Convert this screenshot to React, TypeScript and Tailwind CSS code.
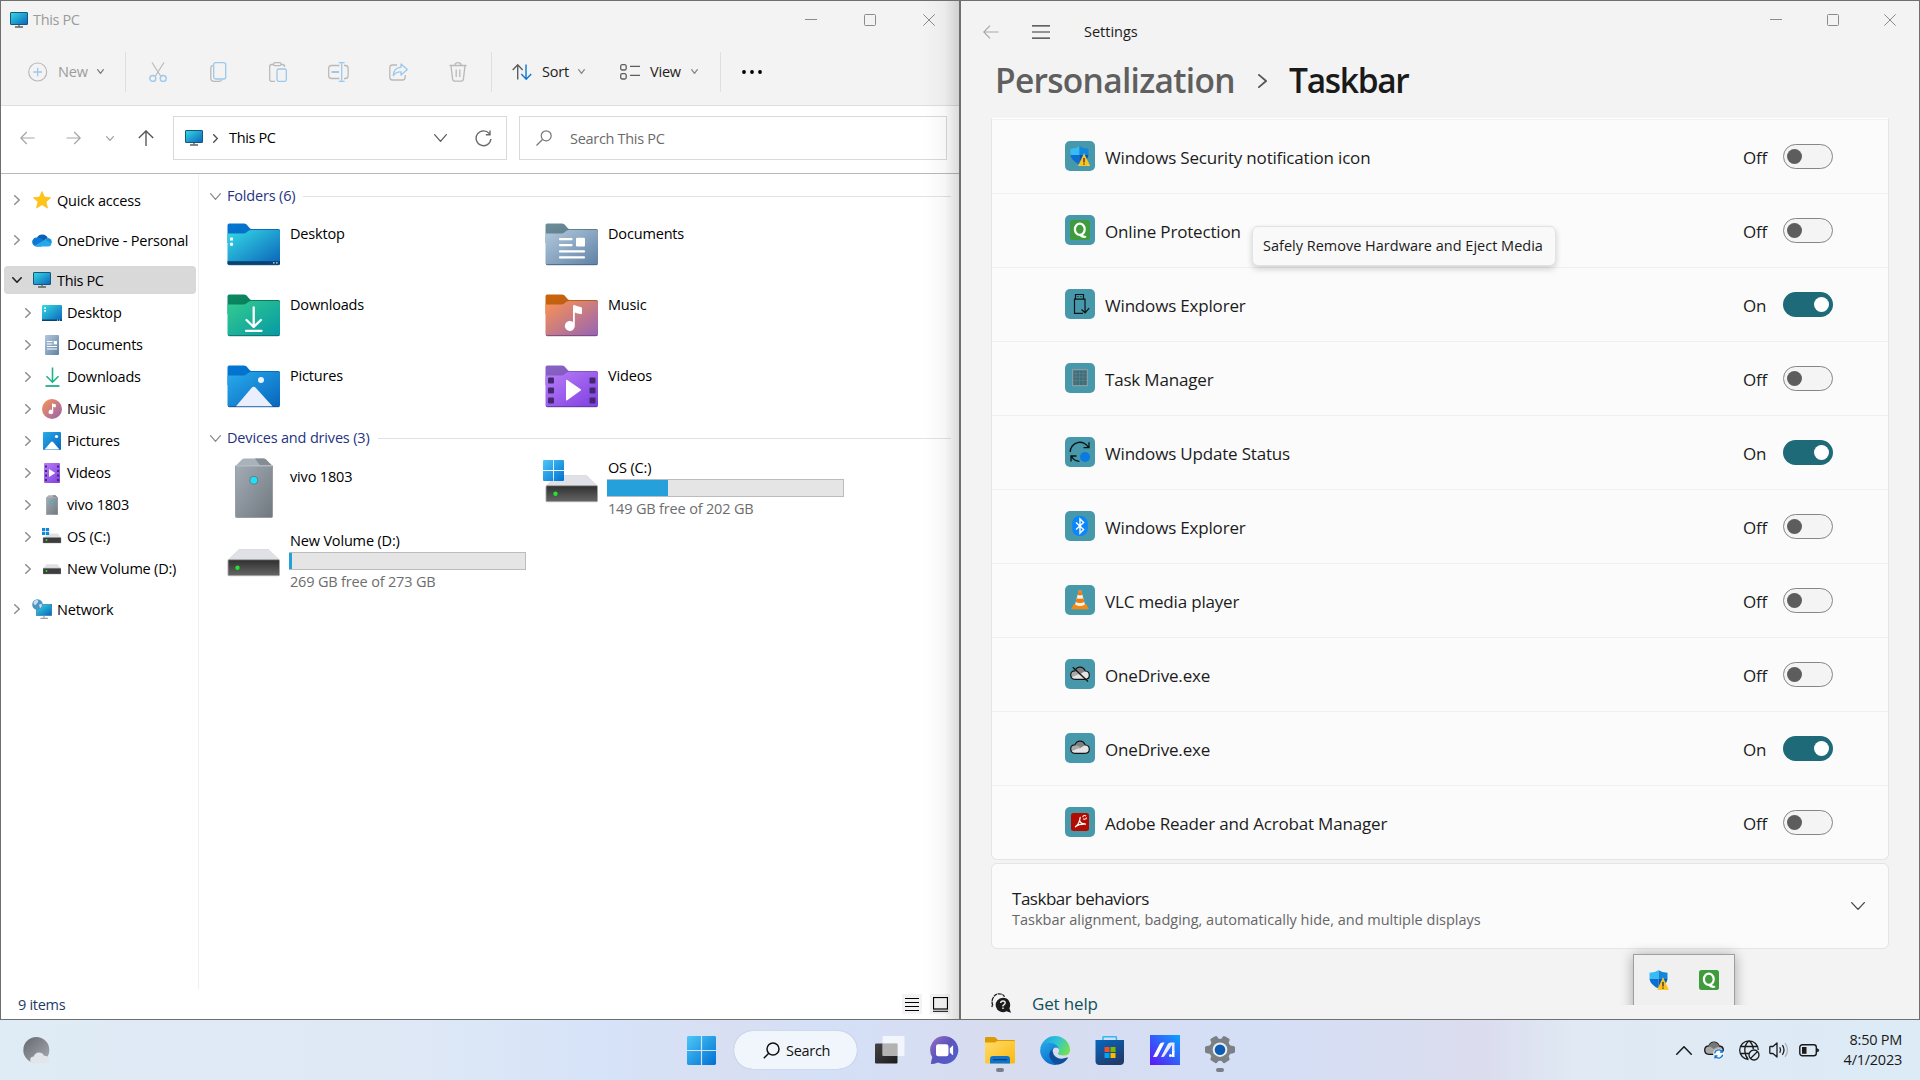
import type { ReactNode } from "react";

/* ---------- small line glyphs ---------- */

type Dir = "right" | "down" | "up";
function Chevron({ dir, w, h, color, sw = 1.3 }: { dir: Dir; w: number; h: number; color: string; sw?: number }) {
  const p = sw / 2;
  const d =
    dir === "right"
      ? `M${p} ${p}L${w - p} ${h / 2}L${p} ${h - p}`
      : dir === "down"
        ? `M${p} ${p}L${w / 2} ${h - p}L${w - p} ${p}`
        : `M${p} ${h - p}L${w / 2} ${p}L${w - p} ${h - p}`;
  return (
    <svg className="shrink-0" width={w} height={h} fill="none" stroke={color} strokeWidth={sw} strokeLinecap="round" strokeLinejoin="round">
      <path d={d} />
    </svg>
  );
}

function WindowControls({ className, gap }: { className: string; gap: string }) {
  return (
    <div className={`flex items-center text-[#8b8b8b] ${className} ${gap}`}>
      <svg width="12" height="12" stroke="currentColor" fill="none"><path d="M0 5.5h12" /></svg>
      <svg width="12" height="12" stroke="currentColor" fill="none"><rect x=".5" y=".5" width="11" height="11" rx="1" /></svg>
      <svg width="12" height="12" stroke="currentColor" fill="none"><path d="M.3.3l11.4 11.4M11.7.3L.3 11.7" /></svg>
    </div>
  );
}

/* ---------- explorer icons ---------- */

function Monitor() {
  return (
    <svg className="shrink-0" width="18" height="16" viewBox="0 0 18 16">
      <defs>
        <linearGradient id="mon" x1="0" y1="0" x2="1" y2="1">
          <stop offset="0" stopColor="#35dbe2" />
          <stop offset="1" stopColor="#0a64bd" />
        </linearGradient>
      </defs>
      <rect x="8" y="12.5" width="2" height="2" fill="#8a8f93" />
      <rect x="5" y="14.3" width="8" height="1.4" fill="#50565b" />
      <rect x=".5" y=".5" width="17" height="12" rx=".5" fill="url(#mon)" stroke="#17557f" />
    </svg>
  );
}

function Folder({ id, tab, tab2, a, b, edge, children }: { id: string; tab: string; tab2: string; a: string; b: string; edge: string; children: ReactNode }) {
  return (
    <svg className="shrink-0" width="54" height="43" viewBox="0 0 54 43">
      <defs>
        <linearGradient id={`${id}f`} x1="0" y1="0" x2="1" y2="1">
          <stop offset="0" stopColor={a} />
          <stop offset="1" stopColor={b} />
        </linearGradient>
        <linearGradient id={`${id}t`} x1="0" y1="0" x2="1" y2="1">
          <stop offset="0" stopColor={tab} />
          <stop offset="1" stopColor={tab2} />
        </linearGradient>
      </defs>
      <path d="M.5 2.2Q.5.5 2.2.5H16.800q1.500 0 2.800 1.100l3 3.400q.8.900 2 .9H51.500q1.500 0 1.500 1.500V20H.5Z" fill={`url(#${id}t)`} />
      <path d="M.5 10.500H16.500q1.600 0 2.800-1l2.200-1.700q1.200-.9 2.800-.9H51.500q1.500 0 1.500 1.500V40q0 1.700-1.700 1.700H2.200Q.5 41.700.5 40Z" fill={`url(#${id}f)`} />
      <path d="M1 40.900q.4.800 1.400.800H51q1.200 0 1.700-.8" fill="none" stroke={edge} strokeWidth="1" />
      {children}
    </svg>
  );
}

const folderDesktop = (
  <Folder id="fd" tab="#0078d4" tab2="#0a62b5" a="#35dbe6" b="#0a62b9" edge="#0b3f74">
    <rect x=".5" y="38.200" width="52.500" height="3.200" fill="#0c4270" />
    <rect x="3" y="14.500" width="3" height="3" rx=".6" fill="#fff" />
    <rect x="3" y="19.700" width="3" height="3" rx=".6" fill="#fff" />
    <path d="M46 39.800h1.600M49 39.800h1.600" stroke="#cde" strokeWidth="1.200" />
  </Folder>
);
const folderDocuments = (
  <Folder id="fo" tab="#6e8e9b" tab2="#52707e" a="#b3c9dd" b="#6082a5" edge="#40607e">
    <g fill="#fff">
      <rect x="14" y="15" width="13.500" height="2.300" rx=".8" />
      <rect x="14" y="21" width="13.500" height="2.300" rx=".8" />
      <rect x="14" y="27.200" width="26" height="2.300" rx=".8" />
      <rect x="14" y="33.200" width="26" height="2.300" rx=".8" />
      <rect x="31" y="14.800" width="9" height="8.600" rx="1.200" />
    </g>
  </Folder>
);
const folderDownloads = (
  <Folder id="fw" tab="#0c8a63" tab2="#067052" a="#33cc8e" b="#0699a5" edge="#06695f">
    <path d="M26.700 13.500V32M19.500 26l7.200 7 7.200-7M19 36.800h15.500" fill="none" stroke="#fff" strokeWidth="2.300" strokeLinecap="round" strokeLinejoin="round" />
  </Folder>
);
const folderMusic = (
  <Folder id="fm" tab="#cf6407" tab2="#a45a2c" a="#fd9350" b="#9464b4" edge="#6d3f7c">
    <path d="M28 11.800q.2-1 1.200-.9 3.300 1.500 6.600 2 1.200.2 1.200 1.200v5.200q0 1-1.200.8-3.500-.4-6-1.700V32a5 5 0 1 1-1.800-3.900Z" fill="#fff" />
  </Folder>
);
const folderPictures = (
  <Folder id="fp" tab="#0078d4" tab2="#0867bd" a="#29abec" b="#0765bd" edge="#0b4a8f">
    <path d="M9 41.200L24.500 23q2.200-2.400 4.400 0L45.500 41.200Z" fill="#e9effd" />
    <circle cx="34" cy="15" r="3" fill="#e9f2fd" />
  </Folder>
);
const folderVideos = (
  <Folder id="fv" tab="#8a63c8" tab2="#7652b4" a="#b97ef8" b="#7f3fe0" edge="#56309c">
    <path d="M21 15.500q0-1.200 1.200-.6l13.500 9.300q.9.700 0 1.400L22.200 35.300q-1.200.6-1.200-.6Z" fill="#fff" />
    <g fill="#43286f">
      <rect x="3" y="12.500" width="6" height="6" rx="1" /><rect x="3" y="22.500" width="6" height="6" rx="1" /><rect x="3" y="32.500" width="6" height="6" rx="1" />
      <rect x="44.500" y="12.500" width="6" height="6" rx="1" /><rect x="44.500" y="22.500" width="6" height="6" rx="1" /><rect x="44.500" y="32.500" width="6" height="6" rx="1" />
    </g>
  </Folder>
);

function Tower({ w, h, id }: { w: number; h: number; id: string }) {
  return (
    <svg width={w} height={h} viewBox="0 0 38 60" preserveAspectRatio="none">
      <defs>
        <linearGradient id={id} x1="0" y1="0" x2="1" y2="1">
          <stop offset="0" stopColor="#a3adb5" />
          <stop offset="1" stopColor="#70777f" />
        </linearGradient>
      </defs>
      <path d="M9.500.5H28.500Q30 .5 31 1.500L37.500 8V10H.5V8L7 1.500Q8 .5 9.500.5Z" fill="#a9b2ba" />
      <path d="M20 .5h8.500Q30 .5 31 1.500L37.500 8h-12Z" fill="#848c94" />
      <rect x=".5" y="7.500" width="37" height="52" rx="1" fill={`url(#${id})`} stroke="#8b939b" strokeWidth=".8" />
      <path d="M1 7.800h36" stroke="#c3cbd2" strokeWidth="1" />
      <circle cx="18.800" cy="22.300" r="4.300" fill="#5b7280" />
      <circle cx="18.800" cy="22.300" r="3.500" fill="#22e0f2" />
    </svg>
  );
}

function Drive({ id }: { id: string }) {
  return (
    <svg width="54" height="28" viewBox="0 0 54 28">
      <defs>
        <linearGradient id={id} x1="0" y1="0" x2="0" y2="1">
          <stop offset="0" stopColor="#2f2f2f" />
          <stop offset="1" stopColor="#666" />
        </linearGradient>
      </defs>
      <path d="M12 .5H41.500L52.500 11H1Z" fill="#dfe1e6" stroke="#cfd1d4" strokeWidth=".6" />
      <rect x="1" y="10.700" width="51.500" height="16" rx="1" fill={`url(#${id})`} stroke="#a6a6a6" strokeWidth=".9" />
      <circle cx="10.500" cy="18.700" r="2.200" fill="#1fe52b" />
    </svg>
  );
}

function WinLogo({ size, id }: { size: number; id: string }) {
  return (
    <svg width={size} height={size} viewBox="0 0 30 30">
      <defs>
        <linearGradient id={id} gradientUnits="userSpaceOnUse" x1="0" y1="0" x2="30" y2="30">
          <stop offset="0" stopColor="#4cc8f8" />
          <stop offset="1" stopColor="#0070d2" />
        </linearGradient>
      </defs>
      <g fill={`url(#${id})`}>
        <path d="M1.500 0H14.400V14.400H0V1.500Q0 0 1.500 0ZM15.600 0H28.500Q30 0 30 1.500V14.400H15.600ZM0 15.600H14.400V30H1.500Q0 30 0 28.500ZM15.600 15.600H30V28.500Q30 30 28.500 30H15.600Z" />
      </g>
    </svg>
  );
}

const sIcon: Record<string, ReactNode> = {
  star: (
    <svg width="18" height="18" viewBox="0 0 18 18">
      <path d="M9 .4l2.500 5.700 6.200.6-4.700 4.100 1.500 6.300L9 13.800l-5.500 3.300L5 10.800.3 6.700l6.200-.6Z" fill="#ffc417" stroke="#fbb50a" strokeWidth=".6" strokeLinejoin="round" />
    </svg>
  ),
  cloud: (
    <svg width="20" height="14" viewBox="0 0 20 14">
      <path d="M5 4.600A6 6 0 0 1 15.800 5L10 9Z" fill="#0a5fb6" />
      <path d="M4.500 13.400A4.400 4.400 0 0 1 4.700 4.500q3-.3 5.800 2L16 9 9 13.400Z" fill="#0f78d4" />
      <path d="M12 8l3.600-3.100A4.300 4.300 0 0 1 19.800 9.500l-2 2.500Z" fill="#1490df" />
      <path d="M2.300 12.700L12.200 7.200q1-.4 2 .1l5.300 3.200Q19.300 13.400 16 13.400H4.500Q3.200 13.400 2.300 12.700Z" fill="#28a8ea" />
    </svg>
  ),
  monitor: <Monitor />,
  desktop: (
    <svg width="20" height="16" viewBox="0 0 20 16">
      <rect width="20" height="16" rx="1" fill="url(#mon)" /><rect y="14.500" width="20" height="1.500" fill="#0c4270" />
      <path d="M2.200 2.200h1.800v1.700H2.200zM2.200 5h1.800v1.700H2.200z" fill="#fff" />
      <path d="M15 15.200h1M17 15.200h1" stroke="#cde" />
    </svg>
  ),
  doc: (
    <svg width="14" height="20" viewBox="0 0 14 20">
      <rect width="14" height="20" rx="1" fill="url(#fof)" />
      <path d="M2 6.500h5.500M2 9h5.500M2 11.500h10M2 14h10" stroke="#fff" strokeWidth="1.200" />
      <rect x="8.800" y="6" width="3.200" height="3.400" fill="#fff" />
    </svg>
  ),
  down: (
    <svg width="15" height="20" viewBox="0 0 15 20" fill="none">
      <path d="M7.500.5V15M1.500 9.200l6 6 6-6" stroke="#1fb489" strokeWidth="1.600" />
      <path d="M.5 19h14" stroke="#16a88a" strokeWidth="1.700" />
    </svg>
  ),
  music: (
    <svg width="20" height="20" viewBox="0 0 20 20">
      <circle cx="10" cy="10" r="10" fill="url(#fmf)" />
      <path d="M10 4.200q1.700.8 3.800 1.100v3q-1.500-.1-2.600-.6v5.300a2.300 2.200 0 1 1-1.200-2Z" fill="#fff" />
    </svg>
  ),
  pic: (
    <svg width="18" height="18" viewBox="0 0 18 18">
      <rect width="18" height="18" rx="1" fill="url(#fpf)" />
      <path d="M1.500 17.500L8 10q1-1.100 2 0l6.500 7.500Z" fill="#fff" /><circle cx="13.500" cy="4.500" r="1.600" fill="#fff" />
    </svg>
  ),
  video: (
    <svg width="16" height="20" viewBox="0 0 16 20">
      <rect width="16" height="20" rx="1" fill="url(#fvf)" />
      <path d="M5 6l6.300 4L5 14Z" fill="#fff" />
      <path d="M2 2.500v16M14 2.500v16" stroke="#43286f" strokeWidth="2" strokeDasharray="2 2.500" />
    </svg>
  ),
  tower: <Tower w={12} h={20} id="tw1" />,
  os: (
    <svg width="20" height="18" viewBox="0 0 20 18">
      <path d="M5 5.500h11l2.500 4h-16Z" fill="#dfe1e6" />
      <rect x="1" y="9.500" width="18" height="5.500" rx=".5" fill="#3d3d3d" stroke="#888" strokeWidth=".4" />
      <circle cx="4.500" cy="12" r=".9" fill="#2bea35" />
      <path d="M0 0h3.200v3.200H0zM3.900 0h3.200v3.200H3.900zM0 3.900h3.200v3.200H0zM3.900 3.900h3.200v3.200H3.900z" fill="#0f88dc" />
    </svg>
  ),
  drive: (
    <svg width="18" height="11" viewBox="0 0 18 11">
      <path d="M3.500.3h11L17.700 4.500H.3Z" fill="#dfe1e6" />
      <rect x="0" y="4.300" width="18" height="5.700" rx=".5" fill="#3d3d3d" stroke="#888" strokeWidth=".4" />
      <circle cx="3.500" cy="7" r=".9" fill="#2bea35" />
    </svg>
  ),
  network: (
    <svg width="20" height="20" viewBox="0 0 20 20">
      <rect x="4.500" y="5.500" width="15.200" height="11" fill="url(#mon)" stroke="#1c6fa3" strokeWidth=".6" />
      <path d="M12 16.500v2.500M8.500 19.400h7.500" stroke="#9aa0a5" strokeWidth="1.200" />
      <circle cx="5.500" cy="5.500" r="5.300" fill="#4d94c2" /><path d="M2 2.500q2-2 4-1.200 1 2-1 3-1 2.500-3 1.200Q1 4 2 2.500ZM7 5.500l2.500-.8.500 2.200-2 2.500Z" fill="#c4e0ee" />
    </svg>
  ),
};

/* ---------- explorer ---------- */

function Divider() {
  return <div className="h-10 w-px shrink-0 bg-[#dfdfdf]" />;
}

function Toolbar() {
  const gray = "#b9b9b9";
  const blue = "#9cc8ec";
  return (
    <div className="flex h-[68px] shrink-0 items-center border-b border-[#dedede] text-[14.5px] tracking-[-0.2px] text-[#1b1b1b]">
      <svg className="ml-[27px] shrink-0" width="20" height="20" fill="none">
        <circle cx="9.700" cy="10" r="9" stroke={gray} strokeWidth="1.200" />
        <path d="M9.700 5.700v8.600M5.400 10h8.600" stroke={blue} strokeWidth="1.300" />
      </svg>
      <span className="mt-px ml-[10px] w-[39px] text-[#9b9b9b]">New</span>
      <Chevron dir="down" w={7} h={5} color="#7d7d7d" />
      <div className="ml-[21px]"><Divider /></div>
      <div className="ml-[23px] flex items-center">
        <svg width="18" height="20" fill="none" strokeWidth="1.200">
          <path d="M3 .5l8.600 13.500M15 .5L6.400 14" stroke={gray} /><circle cx="3.800" cy="16.500" r="3" stroke={blue} strokeWidth="1.400" /><circle cx="14.200" cy="16.500" r="3" stroke={blue} strokeWidth="1.400" />
        </svg>
        <svg className="ml-[43px]" width="17" height="20" fill="none" strokeWidth="1.300">
          <path d="M2.800 3.500Q.8 4 .8 6v10q0 3.300 3.300 3.300h5q1.700 0 2.600-1.300" stroke={gray} /><rect x="3.700" y=".7" width="12" height="16.300" rx="2" stroke={blue} />
        </svg>
        <svg className="ml-[42px]" width="18" height="20" fill="none" strokeWidth="1.300">
          <path d="M4.500 2.500H2.700q-2 0-2 2v12.800q0 2 2 2H6M12 2.500h1.500q2 0 2 2V5" stroke={gray} /><rect x="4.500" y=".7" width="7.500" height="3" rx="1.500" stroke={gray} /><rect x="8" y="7" width="9.300" height="12.300" rx="1.500" stroke={blue} />
        </svg>
        <svg className="ml-[41px]" width="21" height="20" fill="none" strokeWidth="1.300">
          <path d="M11.500 3.500H3.500q-2.800 0-2.800 2.700v7.600q0 2.700 2.800 2.700h8M16 3.500h1.300q2.800 0 2.800 2.700v7.600q0 2.700-2.800 2.700H16" stroke={gray} />
          <path d="M3.500 10H11" stroke={blue} strokeWidth="2" /><path d="M13.700.7v18.600M10.700.7h6M10.700 19.300h6" stroke={blue} />
        </svg>
        <svg className="ml-[40px]" width="19" height="20" fill="none" strokeWidth="1.300" strokeLinejoin="round">
          <path d="M8 3H3.500Q.8 3 .8 5.700v9.600q0 2.700 2.700 2.700h10q2.700 0 2.700-2.700V13" stroke={gray} />
          <path d="M12 2l6.300 5.500L12 13V9.900Q7.500 9.500 4.300 13.500 4.500 6 12 5.200Z" stroke={blue} />
        </svg>
        <svg className="ml-[41px]" width="18" height="20" fill="none" stroke={gray} strokeWidth="1.300">
          <path d="M.5 3.500h17M6 3.200Q6 .7 9 .7t3 2.500M2 3.700l1.600 13.500q.3 2 2 2h6.800q1.700 0 2-2L16 3.700M7.200 7.500v7.500M10.800 7.500v7.500" />
        </svg>
      </div>
      <div className="ml-6"><Divider /></div>
      <svg className="ml-5 shrink-0" width="20" height="16" fill="none" strokeWidth="1.400">
        <path d="M5.700 15.500V1M.7 6l5-5.200 5 5.200" stroke="#5d5d5d" /><path d="M14 .5V15M9.300 10l4.900 5.200 5-5.200" stroke="#0a78d4" />
      </svg>
      <span className="mt-px ml-[10px] w-9">Sort</span>
      <Chevron dir="down" w={7} h={5} color="#888" />
      <svg className="ml-[35px] shrink-0" width="20" height="16" fill="none" stroke="#5d5d5d" strokeWidth="1.300">
        <rect x=".7" y=".7" width="5.500" height="5.300" rx="1.500" /><rect x=".7" y="9.700" width="5.500" height="5.300" rx="1.500" /><path d="M10 2.300h10M10 11.300h10" />
      </svg>
      <span className="mt-px ml-[10px] w-[41px]">View</span>
      <Chevron dir="down" w={7} h={5} color="#888" />
      <div className="ml-[22px]"><Divider /></div>
      <svg className="ml-[21px]" width="20" height="4"><circle cx="2" cy="2" r="1.900" /><circle cx="10" cy="2" r="1.900" /><circle cx="18" cy="2" r="1.900" /></svg>
    </div>
  );
}

function AddressRow() {
  return (
    <div className="flex h-[68px] shrink-0 items-start border-b border-[#b9b9b9] bg-white pt-[10px] text-[14.5px]">
      <div className="flex h-11 w-[172px] items-center pl-[19px]">
        <svg width="15" height="14" fill="none" stroke="#a5a5a5" strokeWidth="1.200"><path d="M.8 7H14.500M6.800 1l-6 6 6 6" /></svg>
        <svg className="ml-[31px]" width="15" height="14" fill="none" stroke="#a5a5a5" strokeWidth="1.200"><path d="M.5 7H14.200M8.200 1l6 6-6 6" /></svg>
        <div className="ml-[25px]"><Chevron dir="down" w={8} h={5} color="#a0a0a0" sw={1.2} /></div>
        <svg className="ml-[24px]" width="16" height="16" fill="none" stroke="#5a5a5a" strokeWidth="1.400"><path d="M8 16V1M.8 8L8 .9 15.200 8" /></svg>
      </div>
      <div className="flex h-11 w-[334px] items-center border border-[#d9d9d9] pl-[11px]">
        <Monitor />
        <div className="ml-[10px]"><Chevron dir="right" w={5} h={9} color="#555" sw={1.4} /></div>
        <span className="ml-[11px] w-[205px] tracking-[-0.35px] text-black">This PC</span>
        <Chevron dir="down" w={13} h={8} color="#5e5e5e" />
        <svg className="ml-[28px]" width="17" height="17" fill="none" stroke="#6a6a6a" strokeWidth="1.400"><path d="M14.300 3.600A7.400 7.400 0 1 0 15.900 9M15 .5V4.700H10.800" /></svg>
      </div>
      <div className="ml-3 flex h-11 w-[428px] items-center border border-[#d9d9d9] pl-[16px]">
        <svg width="16" height="16" fill="none" stroke="#777" strokeWidth="1.200"><circle cx="10.200" cy="5.800" r="5" /><path d="M6.500 9.500L.5 15.500" /></svg>
        <span className="mt-[2px] ml-[18px] tracking-[-0.3px] text-[#6b6b6b]">Search This PC</span>
      </div>
    </div>
  );
}

function TreeItem({ icon, label, level }: { icon: string; label: string; level: 0 | 1 }) {
  return (
    <div className={`flex shrink-0 items-center ${level === 0 ? "h-10 pl-[13px]" : "h-8 pl-6"}`}>
      <Chevron dir="right" w={6} h={10} color="#8e8e8e" sw={1.5} />
      <div className={`flex w-5 justify-center ${level === 0 ? "ml-3" : "ml-[11px]"}`}>{sIcon[icon]}</div>
      <span className={`ml-[5px] whitespace-nowrap ${level === 0 ? "mt-px" : ""}`}>{label}</span>
    </div>
  );
}

function SideTree() {
  const kids = [["desktop", "Desktop"], ["doc", "Documents"], ["down", "Downloads"], ["music", "Music"], ["pic", "Pictures"], ["video", "Videos"], ["tower", "vivo 1803"], ["os", "OS (C:)"], ["drive", "New Volume (D:)"]];
  return (
    <div className="flex w-[198px] shrink-0 flex-col border-r border-[#f0f0f0] pt-[6px] text-[14.5px] tracking-[-0.2px] text-black">
      <TreeItem icon="star" label="Quick access" level={0} />
      <TreeItem icon="cloud" label="OneDrive - Personal" level={0} />
      <div className="mt-[6px] mb-[3px] ml-[3px] flex h-7 w-48 shrink-0 items-center rounded-sm bg-[#d9d9d9] pl-2">
        <Chevron dir="down" w={10} h={6} color="#222" sw={1.6} />
        <div className="ml-[11px]"><Monitor /></div>
        <span className="mt-px ml-[6px] tracking-[-0.35px]">This PC</span>
      </div>
      {kids.map(([icon, label]) => <TreeItem key={label} icon={icon} label={label} level={1} />)}
      <div className="h-1" />
      <TreeItem icon="network" label="Network" level={0} />
    </div>
  );
}

function GroupHeader({ label }: { label: string }) {
  return (
    <div className="flex h-5 items-center text-[#1f3383]">
      <Chevron dir="down" w={11} h={7} color="#8a8a8a" sw={1.2} />
      <span className="ml-[6px] mr-2">{label}</span>
      <div className="mt-px h-px grow bg-[#e2e2e2]" />
    </div>
  );
}

function FolderCell({ icon, label }: { icon: ReactNode; label: string }) {
  return (
    <div className="flex h-[71px] items-start">
      {icon}
      <span className="ml-[9px] leading-[22px]">{label}</span>
    </div>
  );
}

function VolumeInfo({ name, free, fill }: { name: string; free: string; fill: string }) {
  return (
    <div className="flex w-[237px] flex-col">
      <span className="pl-px leading-[22px]">{name}</span>
      <div className="h-[18px] border border-l-0 border-[#bcbcbc] bg-[#e5e5e5]"><div className={`h-full bg-[#26a0da] ${fill}`} /></div>
      <span className="mt-[2px] pl-px leading-[20px] text-[#6d6d6d]">{free}</span>
    </div>
  );
}

function Explorer() {
  return (
    <section className="relative flex h-[1020px] w-[960px] shrink-0 flex-col border border-[#6f6f6f] bg-white">
      <div className="flex h-[37px] shrink-0 items-center bg-[#f3f3f3] pl-[9px] text-[14.5px] tracking-[-0.35px] text-[#9b9b9b]">
        <Monitor />
        <span className="ml-[5px] grow">This PC</span>
        <WindowControls className="mr-[24px]" gap="gap-[47px]" />
      </div>
      <div className="bg-[#f3f3f3]"><Toolbar /></div>
      <AddressRow />
      <div className="flex grow">
        <SideTree />
        <div className="grow pt-[12px] pr-[8px] pl-[11px] text-[14.5px] tracking-[-0.17px] text-black">
          <GroupHeader label="Folders (6)" />
          <div className="mt-[17px] ml-[17px] grid grid-cols-[318px_1fr]">
            <FolderCell icon={folderDesktop} label="Desktop" />
            <FolderCell icon={folderDocuments} label="Documents" />
            <FolderCell icon={folderDownloads} label="Downloads" />
            <FolderCell icon={folderMusic} label="Music" />
            <FolderCell icon={folderPictures} label="Pictures" />
            <FolderCell icon={folderVideos} label="Videos" />
          </div>
          <div className="-mt-[8px]"><GroupHeader label="Devices and drives (3)" /></div>
          <div className="ml-[17px] grid grid-cols-[318px_1fr]">
            <div className="flex h-[73px] items-start pt-[10px]">
              <div className="flex w-[54px] justify-center"><Tower w={38} h={60} id="tw2" /></div>
              <span className="mt-[9px] ml-[9px] leading-[20px]">vivo 1803</span>
            </div>
            <div className="flex items-start pt-[9px]">
              <div className="relative w-[54px] pt-[18px]">
                <Drive id="dr1" />
                <div className="absolute top-[3px] -left-[2px]"><WinLogo size={21} id="wl1" /></div>
              </div>
              <div className="ml-[8px]"><VolumeInfo name="OS (C:)" free="149 GB free of 202 GB" fill="w-[61px]" /></div>
            </div>
            <div className="flex items-start pt-[9px]">
              <div className="w-[54px] pt-[19px]"><Drive id="dr2" /></div>
              <div className="ml-[8px]"><VolumeInfo name="New Volume (D:)" free="269 GB free of 273 GB" fill="w-[3px]" /></div>
            </div>
          </div>
        </div>
      </div>
      <div className="flex h-[30px] shrink-0 items-center pl-[17px] text-[14.5px] tracking-[-0.3px] text-[#1d3a66]">
        <span className="mt-[2px] grow">9 items</span>
        <div className="mr-2 flex size-5 items-center justify-center bg-[#f3f3f3]">
          <svg width="14" height="13" stroke="#000"><path d="M0 .5h14M0 4.500h14M0 8.500h14M0 12.500h14" /></svg>
        </div>
        <div className="mr-[9px] flex size-5 items-center justify-center bg-[#f3f3f3]">
          <svg width="15" height="15" stroke="#000" fill="none"><rect x=".5" y=".5" width="14" height="11.500" strokeWidth="1.200" /><path d="M0 14.300h15" /></svg>
        </div>
      </div>
      <div className="absolute inset-y-0 right-0 w-9 bg-[linear-gradient(to_right,rgba(0,0,0,0),rgba(0,0,0,0.03)_60%,rgba(0,0,0,0.14))]" />
    </section>
  );
}

/* ---------- settings ---------- */

function Shield() {
  return (
    <svg width="20" height="20" viewBox="0 0 20 20">
      <path d="M9.500.3Q6 2.600.5 2.700V9h9Z" fill="#37bdf3" />
      <path d="M9.500.3Q13 2.600 18.500 2.700V9h-9Z" fill="#0f87dc" />
      <path d="M.5 9h9v9.500Q1.500 15 .5 9Z" fill="#0a6fd0" />
      <path d="M18.500 9h-9v9.500Q17.500 15 18.500 9Z" fill="#0753a8" />
      <path d="M14 7.500L20 20H8.200Z" fill="#fdc21d" stroke="#fff5" strokeWidth=".5" />
      <path d="M14 12v4.500M14 17.500v1.300" stroke="#111" strokeWidth="1.100" />
    </svg>
  );
}

function QIcon() {
  return (
    <svg width="20" height="20" viewBox="0 0 20 20">
      <rect width="20" height="20" rx="2.500" fill="#3f9c3c" />
      <ellipse cx="9.800" cy="9.300" rx="4.900" ry="5.600" fill="none" stroke="#fff" strokeWidth="2.200" />
      <path d="M9 15.300l3.200-1q1.200 1.800 4 1.700v1.600Q11.500 18.800 9 15.300Z" fill="#fff" />
    </svg>
  );
}

function TrayCloud({ mode }: { mode: "off" | "on" }) {
  return (
    <svg width="20" height="16" viewBox="0 0 20 16">
      <path d="M5 4.800Q6.500 1.200 10 1.200T15.200 5Q19.300 5.300 19.300 9.200T15 13.300H5Q.7 13.200.7 9T5 4.800Z" fill="#e4e4e4" />
      <path d="M5 4.800Q6.500 1.200 10 1.200T15.200 5L9.500 8.500Z" fill="#808080" />
      <path d="M1 11.500Q0 5 5 4.800l6 2.500Z" fill="#a9a9a9" />
      <path d="M5 4.800Q6.500 1.200 10 1.200T15.200 5Q19.300 5.300 19.300 9.200T15 13.300H5Q.7 13.200.7 9T5 4.800Z" fill="none" stroke="#151515" strokeWidth="1.200" />
      {mode === "off" && <path d="M2.800 1.200L18 15.500" stroke="#151515" strokeWidth="1.400" />}
    </svg>
  );
}

const appIcon: Record<string, ReactNode> = {
  shield: <Shield />,
  q: <QIcon />,
  usb: (
    <svg width="20" height="22" viewBox="0 0 20 22" fill="none" stroke="#0b1416" strokeWidth="1.200">
      <path d="M5.500 6V1.500h8V6M4.500 16.500V6.100h10.500v8.200M4.500 16V20.400h8.500M7.500 3.500h1M10.500 3.500h1" /><path d="M11.500 16.500l3.600 3.300 4-4.600M15.100 14v6" />
    </svg>
  ),
  task: (
    <svg width="16" height="18" viewBox="0 0 16 18">
      <rect x=".7" y=".7" width="14.600" height="16" fill="#3f6d78" stroke="#93a3a6" strokeWidth="1.100" />
      <path d="M4 1v15M7.500 1v15M11 1v15M1 4.500h14M1 8h14M1 11.500h14" stroke="#5a8792" strokeWidth=".6" />
    </svg>
  ),
  update: (
    <svg width="22" height="22" viewBox="0 0 22 22" fill="none" stroke="#0b1416" strokeWidth="1.300">
      <path d="M1.200 11A9.700 9.700 0 0 1 19.500 6.500M20 1.300V6.700H14.500" /><path d="M10.500 20.300Q5 20 2.500 15.500M2 20.500V15h5.500" />
      <circle cx="16" cy="16" r="5" fill="#0a7ae0" stroke="none" />
    </svg>
  ),
  bt: (
    <svg width="16" height="20" viewBox="0 0 16 20">
      <rect x=".2" width="15.600" height="20" rx="7" fill="#0b86fb" />
      <path d="M4 6.500l7.600 7L8 17V3l3.600 3.500-7.600 7" fill="none" stroke="#fff" strokeWidth="1.400" />
    </svg>
  ),
  vlc: (
    <svg width="18" height="20" viewBox="0 0 18 20">
      <path d="M3 14h12l2.700 4.500q0 .8-.8.800H1.100q-.8 0-.8-.8Z" fill="#f58a0d" />
      <path d="M7.800.5h2.400L14 14.500Q9 17.500 4 14.500Z" fill="#f0f0f0" />
      <path d="M7.800.5h2.400l1.200 4.200q-2.400 1-4.800 0ZM5.700 8.200q3.300 1.300 6.600 0l1.100 3.800q-4.400 2-8.800 0Z" fill="#f07c0a" />
    </svg>
  ),
  cloudoff: <TrayCloud mode="off" />,
  cloudon: <TrayCloud mode="on" />,
  adobe: (
    <svg width="18" height="18" viewBox="0 0 18 18">
      <rect width="18" height="18" rx="2.500" fill="#b30b00" />
      <path d="M4.500 13.800Q8.300 11 9.200 4.500M8.800 8Q10 11 14.500 11.200M4.500 13.500Q8 10.800 14 11" fill="none" stroke="#fff" strokeWidth="1.300" strokeLinecap="round" />
      <circle cx="13.600" cy="4.400" r="1.900" fill="none" stroke="#fff" strokeWidth="1.100" strokeDasharray="4 1.500" />
    </svg>
  ),
};

function Toggle({ on }: { on: boolean }) {
  return on ? (
    <div className="flex h-[25px] w-[50px] items-center justify-end rounded-full bg-[#1e6a78] pr-1"><div className="size-[15px] rounded-full bg-white" /></div>
  ) : (
    <div className="flex h-[25px] w-[50px] items-center rounded-full border border-[#868686] bg-[#f4f4f4] pl-[3px]"><div className="size-[15px] rounded-full bg-[#5d5d5d]" /></div>
  );
}

const rows: { icon: string; label: string; on: boolean }[] = [
  { icon: "shield", label: "Windows Security notification icon", on: false },
  { icon: "q", label: "Online Protection", on: false },
  { icon: "usb", label: "Windows Explorer", on: true },
  { icon: "task", label: "Task Manager", on: false },
  { icon: "update", label: "Windows Update Status", on: true },
  { icon: "bt", label: "Windows Explorer", on: false },
  { icon: "vlc", label: "VLC media player", on: false },
  { icon: "cloudoff", label: "OneDrive.exe", on: false },
  { icon: "cloudon", label: "OneDrive.exe", on: true },
  { icon: "adobe", label: "Adobe Reader and Acrobat Manager", on: false },
];

function Settings() {
  return (
    <section className="relative flex h-[1020px] w-[960px] shrink-0 flex-col border border-[#6f6f6f] bg-[#f3f3f3] text-[#1b1b1b]">
      <div className="flex h-[61px] shrink-0 items-center pl-[22px]">
        <svg width="16" height="14" fill="none" stroke="#a9a9a9" strokeWidth="1.200"><path d="M.8 7H15.500M7 .7L.8 7 7 13.300" /></svg>
        <svg className="ml-[33px]" width="18" height="14" stroke="#333" strokeWidth="1.200"><path d="M0 .8h18M0 7h18M0 13.200h18" /></svg>
        <span className="ml-[34px] grow text-[14.5px]">Settings</span>
        <WindowControls className="mr-[23px] mb-[23px]" gap="gap-[45px]" />
      </div>
      <h1 className="flex h-[56px] shrink-0 items-center pb-[20px] pl-[34px] text-[33.5px] font-semibold tracking-[-0.7px] text-[#5f5f5f]">
        <span className="w-[263px]">Personalization</span>
        <div className="mt-[2px]"><Chevron dir="right" w={9} h={14} color="#555" sw={1.8} /></div>
        <span className="ml-[22px] tracking-[-1.3px] text-[#1a1a1a]">Taskbar</span>
      </h1>
      <div className="ml-[30px] w-[898px] shrink-0 rounded-b-md border border-[#e5e5e5] border-t-white bg-[#fbfbfb]">
        {rows.map((r, i) => (
          <div key={i} className="flex h-[74px] items-center border-t border-[#f0f0f0] pl-[73px] text-[17px] tracking-[-0.18px]">
            <div className="mb-px flex size-[30px] shrink-0 items-center justify-center rounded-[5px] bg-[#4798aa]">{appIcon[r.icon]}</div>
            <span className="mt-[3px] ml-[10px] grow">{r.label}</span>
            <span className="mt-[3px] w-[40px]">{r.on ? "On" : "Off"}</span>
            <div className="mr-[55px]"><Toggle on={r.on} /></div>
          </div>
        ))}
      </div>
      <div className="mt-[3px] ml-[30px] flex h-[86px] w-[898px] shrink-0 items-center rounded-md border border-[#e5e5e5] bg-[#fbfbfb] pl-5">
        <div className="grow pt-[5px]">
          <div className="text-[17px] leading-[22px] tracking-[-0.48px]">Taskbar behaviors</div>
          <div className="text-[14.5px] leading-[20px] text-[#666]">Taskbar alignment, badging, automatically hide, and multiple displays</div>
        </div>
        <div className="mr-[23px]"><Chevron dir="down" w={14} h={8} color="#444" /></div>
      </div>
      <div className="mt-[42px] ml-[30px] flex h-6 items-center">
        <svg width="20" height="20" viewBox="0 0 20 20">
          <path d="M1.300 12.500L.8 14M1.800 12.500Q.2 8.500 2 5 4 .8 8 .8t5.500 3" fill="none" stroke="#1b1b1b" strokeWidth="1.300" strokeDasharray="4 .7" />
          <path d="M12 4.700a7.200 7.200 0 0 1 6.400 10.500l1.600 4.600-4.600-1.600A7.200 7.200 0 1 1 12 4.700Z" fill="#1b1b1b" />
          <path d="M9.700 10Q9.800 8 12 8t2.200 1.900Q14.200 11 12 12.500v.9M12 14.500V16" fill="none" stroke="#f3f3f3" strokeWidth="1.400" />
        </svg>
        <span className="mt-[2px] ml-[21px] text-[17px] tracking-[-0.16px] text-[#124f5c]">Get help</span>
      </div>

      <div className="absolute top-[225px] left-[291px] flex h-10 w-[304px] items-center rounded-md border border-[#e3e3e3] bg-[#f9f9f9] pl-[10px] text-[14.5px] whitespace-nowrap shadow-[0_3px_6px_rgba(0,0,0,0.18)]">
        Safely Remove Hardware and Eject Media
      </div>
      <div className="absolute top-[941px] left-[658px] h-[63px] w-[130px] overflow-hidden">
        <div className="mt-3 ml-[14px] flex h-[70px] w-[102px] gap-[30px] border border-[#9f9f9f] bg-[#f0f0f0] pt-[15px] pl-[15px] shadow-[0_1px_12px_rgba(0,0,0,0.32)]">
          <Shield />
          <QIcon />
        </div>
      </div>
    </section>
  );
}

/* ---------- taskbar ---------- */

function Pinned({ active, children }: { active?: boolean; children: ReactNode }) {
  return (
    <div className="relative flex h-[30px] w-[55px] justify-center">
      {children}
      {active && <div className="absolute top-[33px] h-1 w-2 rounded-full bg-[#7b7f89]" />}
    </div>
  );
}

function Taskbar() {
  return (
    <footer className="flex h-[60px] shrink-0 items-center bg-[linear-gradient(to_right,#dfebf5,#dfe9f6_20%,#d6e2f8_32%,#d8dff2_38%,#d4e0f7_43%,#d8dcef_52%,#d4dff6_65%,#dbdcee_77%,#e0e9f4_82%,#dcebf6)]">
      <div className="flex w-[686px] items-center pl-[22px]">
        <svg width="30" height="28" viewBox="0 0 30 28">
          <defs><linearGradient id="moon" x1="0" y1="0" x2="1" y2="1"><stop offset="0" stopColor="#63686e" /><stop offset="1" stopColor="#a9adb3" /></linearGradient></defs>
          <circle cx="14.300" cy="14" r="13" fill="url(#moon)" />
          <path d="M11.500 27.200Q8 26.800 8.200 23.500q.4-2.800 3.600-3Q12.800 16.800 17 16.500q3.600 0 5 3.200 4.500-.3 5 3.700-.3 3.800-4 3.800Z" fill="#e2e5e9" />
        </svg>
      </div>
      <div className="flex w-[48px] pl-px"><WinLogo size={29} id="wl2" /></div>
      <div className="mr-[2px] flex h-[38px] w-[123px] items-center rounded-full bg-[#f1f6fd] pl-[29px] text-[14.5px] tracking-[-0.3px] text-[#111] shadow-[0_0_1px_rgba(80,100,150,0.5)]">
        <svg width="17" height="17" fill="none" stroke="#111" strokeWidth="1.500"><circle cx="10" cy="7" r="6" /><path d="M5.800 11.300L.8 16.300" /></svg>
        <span className="mt-[2px] ml-[6px]">Search</span>
      </div>
      <div className="-ml-[0.5px] flex items-center pl-[4px]">
        <Pinned>
          <svg width="30" height="30" viewBox="0 0 30 30">
            <defs><linearGradient id="tv" x1="0" y1="0" x2="1" y2="1"><stop offset="0" stopColor="#444" /><stop offset="1" stopColor="#1c1c1c" /></linearGradient></defs>
            <rect x="0" y="8.500" width="22.500" height="20" rx="1" fill="url(#tv)" /><rect x="7.500" y="1" width="22" height="20" rx="1" fill="#fff" fillOpacity=".7" /><path d="M7.500 8.500h15V21h-15Z" fill="#aaa" fillOpacity=".65" />
          </svg>
        </Pinned>
        <Pinned>
          <svg className="mr-px" width="29" height="30" viewBox="0 0 29 30">
            <defs><linearGradient id="ch" x1="0" y1="0" x2="1" y2="1"><stop offset="0" stopColor="#9a6fc0" /><stop offset=".45" stopColor="#5d55bd" /><stop offset="1" stopColor="#4f5fd0" /></linearGradient></defs>
            <path d="M14.500 1A14 14 0 1 1 8 27.500Q4.500 29 .8 29 1.300 25 2.300 22.300A14 14 0 0 1 14.500 1Z" fill="url(#ch)" />
            <rect x="6" y="9.300" width="12.500" height="12" rx="2.200" fill="#fff" /><path d="M19.800 13.200l2.700-2.500q.6-.4.600.4v8.400q0 .8-.6.4l-2.700-2.500Z" fill="#fff" />
          </svg>
        </Pinned>
        <Pinned active>
          <svg width="30" height="30" viewBox="0 0 30 30">
            <defs><linearGradient id="fe" x1="0" y1="0" x2="1" y2="1"><stop offset="0" stopColor="#ffdb6b" /><stop offset="1" stopColor="#fbb90d" /></linearGradient></defs>
            <path d="M0 3.300Q0 2 1.300 2H9q1 0 1.800.8L13 5H28.700Q30 5 30 6.300V15H0Z" fill="#dd9a04" />
            <path d="M0 7.500H10L12.500 6H28.700Q30 6 30 7.300V27.200Q30 28.500 28.700 28.500H1.300Q0 28.500 0 27.200Z" fill="url(#fe)" />
            <path d="M5 28.500V24q0-3 3-3H22q3 0 3 3v4.500Z" fill="#0e74cc" /><path d="M8.500 24.700h13" stroke="#083f7d" strokeWidth="1.300" strokeLinecap="round" />
          </svg>
        </Pinned>
        <Pinned>
          <svg width="30" height="30" viewBox="0 0 30 30">
            <defs>
              <linearGradient id="e1" x1="0" y1=".2" x2="1" y2=".6"><stop offset="0" stopColor="#1a9fe0" /><stop offset=".5" stopColor="#2ec3d6" /><stop offset="1" stopColor="#6fe053" /></linearGradient>
              <linearGradient id="e2" x1="0" y1="0" x2=".6" y2="1"><stop offset="0" stopColor="#26a9ea" /><stop offset="1" stopColor="#0a6bcb" /></linearGradient>
            </defs>
            <path d="M.3 13.500A15 15 0 0 1 30 14.200Q30.200 20.500 23.500 20.500 18 20.500 18 18.300 20 16 18.500 13.500 13.500 6.500.3 13.500Z" fill="url(#e1)" />
            <path d="M.1 16Q0 7.800 9 7.800q8 .2 9.800 6.200-3.800-3.300-6.500 1.200-2.500 8 4.700 14.600A15 15 0 0 1 .1 16Z" fill="url(#e2)" />
            <path d="M12.800 13.500q-6 5-1.800 11 2.500 4.300 6.500 5.300 6.500-1 10.300-6.500.6-1.200-.7-.7-8.600 3.300-13.300-2.800-2-3.800-1-6.300Z" fill="#0e4f9c" />
          </svg>
        </Pinned>
        <Pinned>
          <svg width="30" height="30" viewBox="0 0 30 30">
            <defs><linearGradient id="st" x1="0" y1="0" x2=".6" y2="1"><stop offset="0" stopColor="#0767bf" /><stop offset="1" stopColor="#213b6b" /></linearGradient></defs>
            <path d="M8 6V2.300Q8 1.700 8.700 1.700H20.700q.7 0 .7.600V6" fill="none" stroke="#2cbdf0" strokeWidth="1.500" />
            <path d="M.5 5H29V26q0 4-4 4H4.500q-4 0-4-4Z" fill="url(#st)" />
            <path d="M9.500 12h5v5h-5z" fill="#f25022" /><path d="M15.500 12h5v5h-5z" fill="#7fba00" /><path d="M9.500 18h5v5h-5z" fill="#00a4ef" /><path d="M15.500 18h5v5h-5z" fill="#ffb900" />
          </svg>
        </Pinned>
        <Pinned>
          <svg width="30" height="30" viewBox="0 0 30 30">
            <defs><linearGradient id="my" x1="0" y1="1" x2="1" y2="0"><stop offset="0" stopColor="#5f14f5" /><stop offset="1" stopColor="#0aa3ff" /></linearGradient></defs>
            <rect width="30" height="30" fill="url(#my)" />
            <path d="M3 22L9.500 9.500Q10.500 7.500 12.500 7.500h2L7.500 21q-.5 1-1.500 1Z" fill="#fff" /><path d="M11 22L17.500 9.500Q18.500 7.500 20.500 7.500h4V17h-2.500V10L14.500 21q-.5 1-1.500 1Z" fill="#e9eaff" /><circle cx="20.500" cy="20.500" r="1.500" fill="#fff" /><path d="M22 16h2.500v6H22Z" fill="#fff" />
          </svg>
        </Pinned>
        <Pinned active>
          <svg width="30" height="30" viewBox="0 0 30 30">
            <path d="M10.200 1.300q1.200-.7 2 .5L13.400 3.600q1.600.7 3.200 0L17.800 1.800q.8-1.200 2-.5l4 2.200q1.300.7.700 2l-.8 2.300q.4 1.600 1.800 2.600l2.700.5q1.800.2 1.800 1.400v4.500q0 1.200-1.800 1.400l-2.700.5q-1.400 1-1.800 2.600l.8 2.300q.6 1.300-.7 2l-4 2.500q-1.200.7-2-.5l-1.200-1.600q-1.600-.7-3.200 0l-1.200 1.600q-.8 1.200-2 .5l-4-2.500q-1.300-.7-.7-2l.8-2.300q-.4-1.600-1.800-2.600l-2.700-.5Q0 18 0 16.800V12.300q0-1.200 1.800-1.400l2.700-.5q1.400-1 1.800-2.600L5.500 5.500q-.6-1.300.7-2Z" fill="#7a8084" />
            <circle cx="15" cy="14.700" r="7.300" fill="#e9eef3" /><circle cx="15" cy="14.700" r="5.300" fill="#0d5cb3" />
          </svg>
        </Pinned>
      </div>
      <div className="flex grow items-center justify-end pr-[18px] text-[#1a1a1a]">
        <Chevron dir="up" w={16} h={9} color="#1a1a1a" sw={1.5} />
        <svg className="ml-3" width="21" height="20" viewBox="0 0 21 20">
          <path d="M5 5.800Q6.500 2.200 10 2.200T15.200 6Q19.300 6.300 19.300 10T15 14.300H5Q.7 14.200.7 10T5 5.800Z" fill="#a9a9a9" stroke="#151515" strokeWidth="1.300" />
          <path d="M5 5.800Q6.500 2.200 10 2.200T15.200 6L9.500 9Z" fill="#777" />
          <circle cx="14.700" cy="14" r="5.500" fill="#f5faff" />
          <path d="M10.700 13.300a4.100 4.100 0 0 1 7.500-1.500M18.700 14.700a4.100 4.100 0 0 1-7.500 1.500M18.500 9.500v2.600H16M11 18.500v-2.600h2.500" fill="none" stroke="#1673c8" strokeWidth="1.300" />
        </svg>
        <svg className="ml-[14px]" width="21" height="21" viewBox="0 0 21 21" fill="none" stroke="#1a1a1a" strokeWidth="1.300">
          <path d="M9.500 19.500A9.300 9.300 0 1 1 19.300 10M9.800 .8Q5.500 5 5.800 10.500T9 19M10.300.8Q14 4.500 14.300 9M1.500 6.500H18.500M1 13.500H10" />
          <circle cx="15" cy="15" r="5" /><path d="M11.500 18.500l7-7" />
        </svg>
        <svg className="ml-[9px]" width="21" height="18" viewBox="0 0 21 18" fill="none" stroke="#1a1a1a" strokeWidth="1.300">
          <path d="M.8 6.300q0-.8.8-.8H4L8 2V16L4 12.500H1.600q-.8 0-.8-.8Z" strokeLinejoin="round" /><path d="M10.800 6.200q1.600 2.800 0 5.600M13.400 4.200q3.200 4.800 0 9.600" /><path d="M16 2.200q5 6.800 0 13.600" stroke="#aab4bd" />
        </svg>
        <svg className="ml-[9px]" width="21" height="13" viewBox="0 0 21 13" fill="none" stroke="#1a1a1a" strokeWidth="1.400">
          <rect x=".8" y=".8" width="16.500" height="11" rx="2.500" /><rect x="3" y="3" width="4.500" height="6.800" fill="#1a1a1a" stroke="none" /><path d="M18.200 4.800q1.500.1 1.500 1.500t-1.500 1.500Z" fill="#1a1a1a" strokeWidth=".8" />
        </svg>
        <div className="ml-[19px] w-[63px] text-right text-[14.5px] leading-[20px] tracking-[-0.25px]">
          <div>8:50 PM</div>
          <div>4/1/2023</div>
        </div>
      </div>
    </footer>
  );
}

export default function App() {
  return (
    <div className="flex h-[1080px] w-[1920px] flex-col overflow-hidden font-['Open_Sans','Noto_Sans',sans-serif]">
      <main className="flex">
        <Explorer />
        <Settings />
      </main>
      <Taskbar />
    </div>
  );
}
